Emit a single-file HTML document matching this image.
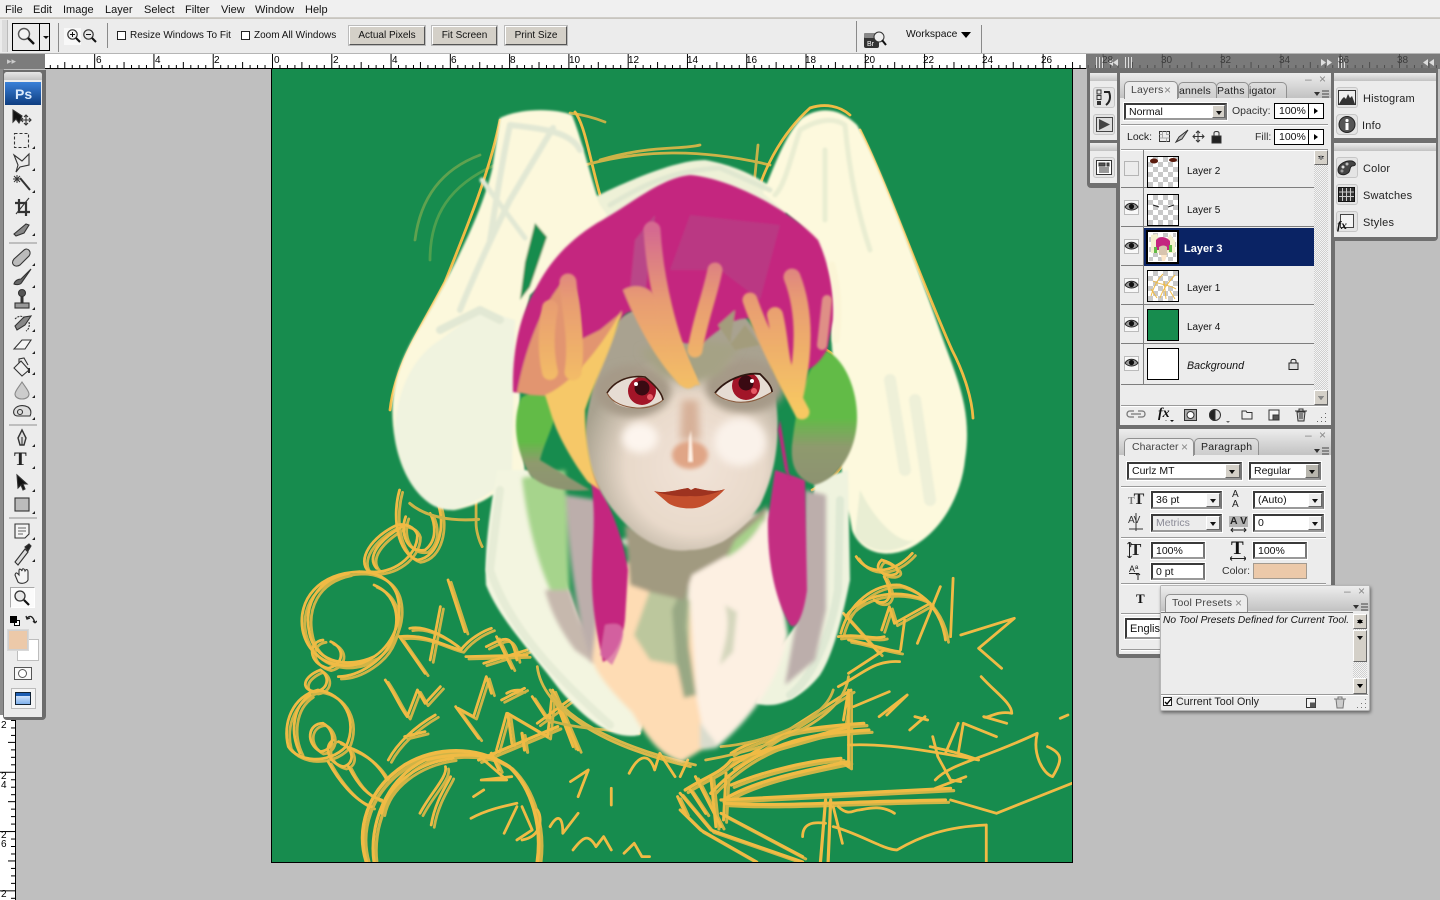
<!DOCTYPE html>
<html lang="en"><head><meta charset="utf-8"><title>Photoshop</title>
<style>
html,body{margin:0;padding:0;width:1440px;height:900px;overflow:hidden;background:#bfbfbf;font-family:"Liberation Sans",sans-serif;font-size:11px;color:#111}
div,span,svg{position:absolute;box-sizing:border-box}
.t{white-space:nowrap;line-height:13px}
.m{top:3px;font-size:11px;line-height:14px;color:#111;white-space:nowrap}
.btn{top:26px;height:19px;background:#d4d0c8;border:1px solid;border-color:#fff #555 #555 #fff;box-shadow:0 0 0 1px #bbb;text-align:center;font-size:10px;line-height:18px;white-space:nowrap}
.cb{width:9px;height:9px;background:#fff;border:1px solid #222;top:31px}
.vs{width:1px;background:#8a8a8a}
.lab{top:55px;font-size:10px;line-height:11px;color:#000}
.lab2{top:55px;font-size:10px;line-height:11px;color:#3c3c3c}
.p{background:#ececec}
.hd{background:linear-gradient(#ededed,#c2c2c2)}
.tab{background:linear-gradient(#dedede,#cdcdcd);border:1px solid #909090;border-bottom:0;border-radius:5px 5px 0 0;font-size:10.5px;line-height:17px;color:#222;letter-spacing:.15px;white-space:nowrap;overflow:hidden;text-align:left}
.tab.a{background:#ececec;color:#444}
.x{color:#888;font-size:12px;line-height:13px;white-space:nowrap}
.in{background:#fff;border:2px solid #3a3a3a;border-right-color:#777;border-bottom-color:#999;box-shadow:0 0 0 1px #fff;font-size:10.5px;line-height:13px;padding-left:3px;white-space:nowrap;overflow:hidden;color:#111}
.dd{background:#d4d0c8;border:1px solid;border-color:#fff #666 #666 #fff}
.dd:after{content:"";position:absolute;left:3px;top:5px;border:3px solid transparent;border-top:4px solid #111;border-bottom:0}
.hr{height:1px;background:#9a9a9a;box-shadow:0 1px 0 #fff}
.row{left:1121px;width:193px;height:38px;border-bottom:1px solid #7e7e7e}
.th{left:1147px;width:32px;height:32px;border:1px solid #000;background:repeating-conic-gradient(#c8c8c8 0 25%,#fff 0 50%) 0 0/10px 10px}
.ln{left:1187px;font-size:10px;line-height:13px;white-space:nowrap;color:#111}
.eb{left:1124px;width:15px;height:15px;background:#f8f8f8;border:1px solid #bbb}
.rb{left:1336px;width:22px;height:21px;background:#e4e4e4;border:1px solid #c6c6c6;border-radius:3px}
.rt{left:1363px;font-size:11px;color:#222;letter-spacing:.2px;white-space:nowrap;line-height:13px}
.s path,.s ellipse{vector-effect:non-scaling-stroke;fill:none;stroke:#f0bb45;stroke-width:2.8;stroke-linecap:round;stroke-linejoin:round}
.f path{vector-effect:non-scaling-stroke;fill:none;stroke-linecap:round;stroke-linejoin:round}
</style></head><body>

<!-- canvas area background -->
<div style="left:0;top:0;width:1440px;height:900px;background:#bfbfbf"></div>

<!-- artwork -->
<div style="left:271px;top:68px;width:802px;height:795px;border:1px solid #000;background:#178c4e"></div>
<svg style="left:272px;top:69px" width="800" height="793" viewBox="272 69 800 793">
<defs>
<filter id="b1" x="-20%" y="-20%" width="140%" height="140%"><feGaussianBlur stdDeviation="1"/></filter>
<filter id="b2" x="-20%" y="-20%" width="140%" height="140%"><feGaussianBlur stdDeviation="2"/></filter>
<filter id="b4" x="-30%" y="-30%" width="160%" height="160%"><feGaussianBlur stdDeviation="4"/></filter>
<filter id="b8" x="-40%" y="-40%" width="180%" height="180%"><feGaussianBlur stdDeviation="8"/></filter>
<linearGradient id="bang2" gradientUnits="userSpaceOnUse" x1="0" y1="230" x2="0" y2="410"><stop offset="0" stop-color="#d56a90"/><stop offset=".4" stop-color="#e89d72"/><stop offset="1" stop-color="#f7c862"/></linearGradient>
<linearGradient id="hp" x1="0" y1="0" x2="0" y2="1"><stop offset="0" stop-color="#62bb47"/><stop offset=".5" stop-color="#62bb47"/><stop offset=".72" stop-color="#8f9a6e"/><stop offset="1" stop-color="#8d9270"/></linearGradient>
<radialGradient id="skin" gradientUnits="userSpaceOnUse" cx="695" cy="465" r="115"><stop offset="0" stop-color="#f2e4d8"/><stop offset=".6" stop-color="#e8d9ca"/><stop offset="1" stop-color="#a9a290"/></radialGradient>
<clipPath id="el"><path d="M607 393C615 380 630 376 645 378C655 385 663 395 663 400C645 410 625 410 615 403Z"/></clipPath>
<clipPath id="er"><path d="M715 393C725 380 745 372 760 375C768 383 772 388 772 392C760 400 740 405 725 400Z"/></clipPath>
</defs>

<!-- upper sketch lines -->
<g class="s">
<path d="M575 112C585 125 590 160 600 195"/>
<path d="M570 113C585 115 595 118 605 122" opacity=".8"/>
<path d="M585 165C640 150 700 148 770 165" style="stroke:#cdb348"/>
<path d="M600 160C650 145 680 150 700 145" style="stroke:#cdb348"/>
<path d="M415 240C420 200 440 170 480 155" style="stroke:#5fa24f"/>
<path d="M430 260C430 215 450 185 495 165" style="stroke:#4ea04f"/>
<path d="M755 205C760 175 780 135 810 108C825 103 840 106 850 115"/>
<path d="M758 145L752 205" style="stroke:#c7b24a"/>
<path d="M500 120C490 170 470 220 445 282C420 330 395 365 390 410"/>
<path d="M860 130C885 180 925 290 952 350C965 375 972 400 973 418"/>
<path d="M800 345C830 340 855 370 857 410C858 450 840 478 812 490"/>
</g>
<g class="s" transform="translate(272 460) scale(.5102 .3333)">
<g id="sk">
<path d="M250 90C235 170 245 280 285 300C330 290 340 190 325 130"/>
<path d="M262 170C250 220 265 280 300 270C325 240 320 190 310 160"/>
<path d="M245 195C195 230 165 300 190 335C235 345 285 290 285 225C280 200 262 190 245 195"/>
<path d="M255 200C210 240 185 290 205 325"/>
<path d="M172 335C90 340 50 420 60 510C70 590 120 635 175 610C235 575 260 480 245 405C235 360 205 335 172 335"/>
<path d="M150 340C85 360 60 440 75 530C90 610 150 625 200 590"/>
<path d="M200 375C240 400 255 470 235 540C220 600 170 650 130 650"/>
<path d="M100 540C70 545 70 610 110 625C140 615 145 565 115 545"/>
<path d="M95 630C60 650 55 690 85 695C110 690 115 650 95 630"/>
<path d="M90 690C40 710 20 790 32 860C50 905 110 915 145 860C170 780 140 700 90 690"/>
<path d="M75 705C40 740 35 820 55 880"/>
<path d="M100 790C70 790 65 850 95 875C125 870 125 810 100 790"/>
<path d="M120 840C100 860 110 910 140 920C165 910 160 860 130 845"/>
<path d="M145 860C190 880 215 930 225 960"/>
<path d="M110 905C130 960 160 1020 195 1040"/>
<path d="M150 920C170 980 190 1010 215 1020"/>
<path d="M185 1206C165 1110 185 990 260 915C320 860 400 855 465 920C510 985 530 1100 520 1206" style="stroke-width:3.6"/>
<path d="M200 1206C190 1100 220 960 300 900C340 885 400 875 440 900" style="stroke-width:3.2"/>
<path d="M215 1060C225 980 280 910 355 895"/>
<path d="M290 1060C310 1000 345 950 340 920M312 1095C320 1020 345 970 350 950"/>
<path d="M250 530C300 520 340 560 370 570C390 530 420 510 430 505"/>
<path d="M270 505C300 495 340 530 365 560"/>
<path d="M345 360L378 515M330 440L310 600M250 530L300 640"/>
<path d="M222 660C240 700 250 740 265 770L285 690L300 730L330 680"/>
<path d="M228 900C245 850 280 800 320 765M260 830L300 815"/>
<path d="M380 590L500 585M415 610L500 570M420 560C460 530 470 520 480 600M440 530L470 625"/>
<path d="M360 740L405 835M365 745L395 770L420 650L430 700"/>
<path d="M450 720L495 685M460 700C470 690 480 690 490 690"/>
<path d="M440 870L460 760M470 850L462 760L540 830L550 690L600 870M550 700L590 860M510 710L540 780M520 790L600 700"/>
<path d="M405 900L560 800M430 880L445 930M490 820L495 870" style="stroke-width:3.2"/>
<path d="M810 990C850 950 880 940 900 900L1130 800" style="stroke-width:3.4"/>
<path d="M890 1015C950 960 1050 930 1130 905" style="stroke-width:3.4"/>
<path d="M900 975C970 930 1060 900 1115 895" style="stroke-width:3.2"/>
<path d="M880 1020C1000 1010 1150 1000 1330 985" style="stroke-width:3.2"/>
<path d="M890 1030C1000 1040 1120 1025 1320 1020" style="stroke-width:3.2"/>
<path d="M860 1000C950 850 1050 820 1170 810" style="stroke-width:3.2"/>
<path d="M900 880C960 820 1060 800 1160 790" style="stroke-width:3.2"/>
<path d="M900 920L1135 690M1130 690L1130 920L1115 905M1130 690L1120 780"/>
<path d="M830 950L880 1100M860 950L870 1100M890 940L885 1080M800 1000L860 1110L1040 1206M800 1050L840 1110L950 1206M880 1060L1040 1190M820 990L850 1060M795 1010L810 1060" style="stroke-width:3"/>
<path d="M1115 520C1130 430 1180 370 1230 375C1290 400 1315 480 1320 540M1125 470C1150 410 1220 380 1280 420"/>
<path d="M1290 430L1220 490L1210 440L1195 510M1130 540C1170 550 1200 570 1230 575M1110 530C1150 520 1180 540 1200 530M1120 460L1190 580"/>
<path d="M1195 300C1220 310 1240 340 1215 345C1190 345 1180 320 1195 300M1145 290C1170 350 1220 340 1255 280M1180 420C1200 440 1225 420 1200 350"/>
</g>
<use href="#sk" transform="translate(6 7)" opacity=".85"/>
<path d="M270 130C300 170 350 185 405 178" style="stroke:#cdb348;stroke-width:3"/>
<path d="M400 120V190C400 210 405 240 412 260" style="stroke:#cdb348"/>
<path d="M520 620C530 750 650 860 820 920" style="stroke:#d8b84a"/>
<path d="M545 690C580 790 700 870 830 915" style="stroke:#d8b84a"/>
<path d="M540 780C600 810 680 810 720 820" style="stroke:#cdb348"/>
<path d="M1130 650C1120 770 1000 860 850 900" style="stroke:#d8b84a"/>
<path d="M1100 690C1080 790 960 850 880 860" style="stroke:#cdb348"/>
<path d="M1140 740L1210 695"/>
<path d="M1130 855C1200 850 1280 870 1385 900C1350 880 1320 870 1290 860"/>
<path d="M1085 1020L1075 1206M1095 1020L1090 1206" style="stroke-width:3.2"/>
<path d="M1100 1040L1118 1150"/>
<path d="M1100 1100C1150 1120 1200 1170 1225 1170C1270 1130 1320 1100 1400 1095L1400 1206"/>
<path d="M1040 1130C1040 1090 1060 1085 1085 1090M1110 1040C1130 1070 1140 1050 1150 1050C1160 1050 1190 1030 1220 1060"/>
<path d="M1330 1020L1420 1060L1568 970"/>
<path d="M1300 960C1330 910 1390 900 1500 820C1490 880 1510 940 1530 950C1550 900 1550 880 1520 860"/>
<path d="M1295 830L1305 890L1330 960L1350 965M1345 880L1355 790L1420 830M1345 790L1320 880M1300 985L1360 950"/>
<path d="M1350 525L1455 475L1385 565L1430 625"/>
<path d="M1390 650C1420 700 1450 730 1450 760C1420 750 1400 780 1395 770L1440 790"/>
<path d="M1190 770L1245 705L1205 765M1250 810L1280 770M1260 770L1285 780M1545 775L1560 765"/>
<path d="M1335 355L1330 530M1310 380L1265 550M1240 480L1232 570"/>
<path d="M1110 680C1160 640 1180 600 1230 605M1130 640L1200 570"/>
<path d="M700 940C720 880 740 880 750 930L760 880L790 950M815 900L800 950"/>
<path d="M585 965L620 930L600 1010M665 985V1035"/>
<path d="M590 1170C610 1130 620 1120 635 1160L650 1130L665 1170M690 1180L710 1150L725 1190L740 1190"/>
<path d="M545 1100C560 1060 570 1070 570 1120L600 1060"/>
<path d="M415 990L395 1010M390 1075C420 1050 450 1040 480 1030M480 1040L455 1120M490 1040L510 1110L480 1140"/>
<path d="M520 1050C530 1070 530 1130 490 1140"/>
<path d="M415 900L460 960L410 960L470 950"/>
</g>

<!-- hood and ears -->
<g filter="url(#b1)">
<path d="M597 196C640 175 680 160 705 160C735 165 770 180 790 205L770 240L610 240Z" fill="#eef1d7"/>
<!-- left ear -->
<path d="M500 118C520 108 555 108 572 115C582 140 590 175 600 205L607 215L597 240L560 270L530 295L518 350L520 400L525 475L505 480C498 495 480 505 455 510C425 512 402 480 395 440C388 400 395 370 415 335C445 285 480 220 492 170Z" fill="#fcf8dc"/>
<path d="M535 223L547 237L530 287L520 300L525 262Z" fill="#178c4e"/>
<path d="M480 310L515 320L512 470C495 495 470 505 450 510C425 510 402 480 395 435C395 390 415 355 440 340Z" fill="#f0f3df"/>
<!-- right ear -->
<path d="M763 193C775 165 785 135 802 118C820 106 840 108 857 125C880 165 915 260 945 345C960 385 972 415 965 460C962 490 945 530 910 548C885 560 860 552 852 530L840 460L830 320L820 250L800 225Z" fill="#fdf9dd"/>
<path d="M860 490C880 530 905 545 915 540C895 555 870 555 855 535Z" fill="#e9eed3"/>
<!-- long side flaps -->
<path d="M497 470C490 510 484 550 486 585C500 620 530 650 560 690C590 725 615 740 640 735L650 705C610 680 590 650 572 600L545 530L530 470Z" fill="#f3f5e0"/>
<path d="M815 480L848 470L850 580C840 630 830 660 820 675C800 700 775 710 755 703L770 660L800 620Z" fill="#eff3de"/>
</g>
<g class="f" filter="url(#b1)" fill="none" stroke-linecap="round" stroke-linejoin="round">
<path d="M510 125C500 170 495 210 490 240M510 125C535 128 570 130 580 150M553 128L510 200C490 240 470 285 460 310" stroke="#e2e8d4" stroke-width="6"/>
<path d="M482 180L525 238" stroke="#e2e8d4" stroke-width="5"/>
<path d="M440 330L480 310L500 320" stroke="#e2e8d4" stroke-width="8"/>
<path d="M800 130C790 160 785 185 775 195M800 130C820 118 835 118 845 125M845 125C850 180 860 220 870 250M825 150L825 220" stroke="#e9edd2" stroke-width="5"/>
<path d="M610 205C650 180 680 170 720 168L770 190" stroke="#e0e7d0" stroke-width="5"/>
<path d="M890 380L905 470M915 400L930 500" stroke="#eef0d8" stroke-width="12"/>
<path d="M500 490L490 570C510 630 560 680 610 725" stroke="#e6ecd6" stroke-width="8"/>
<path d="M840 500L838 590C830 640 810 680 790 695" stroke="#dfe9d4" stroke-width="8"/>
</g>

<!-- behind-face strands -->
<g filter="url(#b2)">
<path d="M522 478L565 470L570 600L555 600C540 570 528 530 522 478Z" fill="#a6d48c"/>
<path d="M566 495L598 500L610 662L590 662C578 620 568 560 566 495Z" fill="#bcaeab"/>
<path d="M805 490L826 495L826 610L815 660L785 685L800 600Z" fill="#bcaeab"/>
<path d="M545 590L570 590L592 662L575 650C560 630 550 610 545 590Z" fill="#c6b8ad"/>
</g>

<!-- neck -->
<g filter="url(#b2)">
<path d="M620 540L770 510L788 635C780 680 750 720 716 748L700 750L680 600Z" fill="#fdf0e2"/>
<path d="M600 590L629 560L690 600L697 700L706 747L682 762C662 757 648 740 632 712C610 690 598 675 592 660Z" fill="#fedcb4"/>
<path d="M650 590L690 600L688 690L676 665L650 660L634 635Z" fill="#bcc79d"/>
<path d="M690 570L686 627L696 695L684 698L676 660L672 610Z" fill="#98a884"/>
<path d="M625 525L680 545L721 540L768 505L765 520L726 556L692 575L684 600L650 592L630 585Z" fill="#a19a80"/>
<path d="M767 512C760 530 745 548 726 558L735 540Z" fill="#a7d18b"/>
<path d="M725 605C732 630 722 650 720 665L733 652L737 612Z" fill="#cbd1b4" opacity=".8"/>
<path d="M700 722C710 737 720 745 716 748L700 748Z" fill="#d9dccd"/>
</g>
<!-- long magenta strands -->
<g filter="url(#b1)">
<path d="M588 465C605 495 622 530 628 570L625 620C622 645 612 658 603 662C598 640 592 610 592 580C592 540 598 510 588 465Z" fill="#c4257f"/>
<path d="M775 470L805 480L807 590C803 620 795 630 790 625C775 600 767 560 768 520Z" fill="#c42e82"/>
<path d="M605 625C625 620 630 630 612 665L600 655Z" fill="#d770a8" opacity=".8"/>
</g>

<!-- headphones -->
<g filter="url(#b1)">
<path d="M521 398C535 388 550 392 557 405C555 425 545 440 540 460L590 490C570 492 545 490 530 475C515 450 512 420 521 398Z" fill="url(#hp)"/>
<path d="M822 350C840 352 858 385 857 420C856 450 840 478 815 485C800 480 790 470 792 445C795 420 800 380 822 350Z" fill="url(#hp)"/>
</g>

<!-- face -->
<g filter="url(#b1)">
<path d="M620 318C600 360 586 400 585 440C588 480 610 510 632 530C650 545 670 553 690 550C715 550 740 535 760 505C772 480 780 450 777 410L770 350L740 310L710 300L650 300Z" fill="url(#skin)"/>
</g>
<ellipse cx="633" cy="391" rx="38" ry="26" fill="#a69a88" filter="url(#b4)"/>
<ellipse cx="745" cy="386" rx="40" ry="27" fill="#a69a88" filter="url(#b4)"/>
<path d="M640 350L700 340L740 345L720 375L690 385L660 375Z" fill="#a5a285" filter="url(#b4)"/>
<ellipse cx="640" cy="438" rx="18" ry="15" fill="#fdf5ee" filter="url(#b4)"/>
<ellipse cx="740" cy="442" rx="26" ry="24" fill="#faf2ea" filter="url(#b4)"/>
<path d="M682 400L698 400L700 440L680 440Z" fill="#d7b199" filter="url(#b4)"/>
<ellipse cx="690" cy="455" rx="18" ry="14" fill="#e0a586" filter="url(#b2)"/>
<path d="M689 438L691 430L692 445L693 462L688 462Z" fill="#fff3e8" filter="url(#b1)"/>

<!-- eyes -->
<path d="M607 393C615 380 630 376 645 378C655 385 663 395 663 400C645 410 625 410 615 403Z" fill="#e6dcd3"/>
<path d="M715 393C725 380 745 372 760 375C768 383 772 388 772 392C760 400 740 405 725 400Z" fill="#e6dcd3"/>
<g clip-path="url(#el)"><circle cx="642" cy="391" r="14" fill="#a21528"/><circle cx="642" cy="388" r="7.5" fill="#3a0a12"/><circle cx="650" cy="397" r="3" fill="#e75a66"/><circle cx="636" cy="384" r="2" fill="#fff"/></g>
<g clip-path="url(#er)"><circle cx="746" cy="386" r="14" fill="#a21528"/><circle cx="746" cy="383" r="7.5" fill="#3a0a12"/><circle cx="754" cy="391" r="3" fill="#e75a66"/><circle cx="752" cy="381" r="2" fill="#fff"/></g>
<path d="M607 393C615 380 630 375 645 377C655 385 662 393 663 400" fill="none" stroke="#3a1d12" stroke-width="1.6"/>
<path d="M607 393C612 403 625 408 640 408C650 408 658 404 663 400" fill="none" stroke="#8a5a3c" stroke-width="1"/>
<path d="M715 393C725 380 745 372 760 374C766 380 772 386 772 392" fill="none" stroke="#2f1710" stroke-width="1.8"/>
<path d="M715 393C722 400 735 403 745 402C755 402 765 396 772 392" fill="none" stroke="#8a5a3c" stroke-width="1"/>

<!-- lips -->
<path d="M654 491C665 494 675 490 688 488L691 490L695 488C705 490 715 493 725 489C718 497 708 504 700 507C690 510 675 508 668 503Z" fill="#c44f2d"/>
<path d="M654 491C665 494 675 490 688 488L691 490L695 488C705 490 715 493 725 489C712 495 700 497 690 496C678 497 665 495 654 491Z" fill="#9e3320"/>

<!-- hair -->
<g filter="url(#b1)">
<path d="M690 175C660 178 630 205 597 223C570 240 550 260 535 290C520 315 512 350 513 392C525 395 540 390 550 385C570 370 590 350 620 320C635 300 640 320 660 340L700 345C730 320 740 315 760 320L780 360C800 380 815 370 827 350L833 320C835 285 825 255 818 240C790 210 730 178 690 175Z" fill="#c4257f"/>
<path d="M690 215L780 225L760 300L720 270L670 270Z" fill="#b83c84" opacity=".8"/>
<path d="M635 240L655 215L645 295L630 290Z" fill="#b5558b" opacity=".7"/>
<path d="M718 325L735 310L730 345L745 325L760 345L735 350Z" fill="#a39c7c"/>
<path d="M517 392C525 350 540 310 560 285C575 275 582 300 580 340L600 330L622 312C610 350 590 380 565 397L530 395Z" fill="#e2956f"/>
<path d="M622 310C612 350 595 380 585 410C585 440 590 470 600 490L588 482C575 465 560 440 553 420L545 395C570 385 600 350 622 310Z" fill="#f6c868"/>
<path d="M623 290C640 280 655 290 665 310L700 385L680 385C655 360 635 320 623 290Z" fill="url(#bang2)"/>
</g>
<g class="f" fill="none" filter="url(#b1)" stroke-linecap="round" stroke-linejoin="round">
<path d="M568 282C570 310 578 340 573 372" stroke="url(#bang2)" stroke-width="17"/>
<path d="M550 308C546 330 545 350 550 372" stroke="url(#bang2)" stroke-width="16"/>
<path d="M652 230C655 280 668 335 688 380" stroke="url(#bang2)" stroke-width="17"/>
<path d="M715 270C710 295 700 320 695 350" stroke="url(#bang2)" stroke-width="15"/>
<path d="M750 300C760 330 785 380 802 412" stroke="url(#bang2)" stroke-width="15"/>
<path d="M792 277C805 310 805 350 795 395" stroke="url(#bang2)" stroke-width="17"/>
<path d="M775 315C780 335 780 355 785 372" stroke="url(#bang2)" stroke-width="16"/>
<path d="M827 300L822 345" stroke="#df8f86" stroke-width="10"/>
<path d="M832 265C838 290 840 310 836 340" stroke="#fbf5d6" stroke-width="7"/>
</g>
<path d="M780 420L790 480L785 470L778 430Z" fill="#c4257f" filter="url(#b1)"/>
</svg>

<!-- menu bar -->
<div style="left:0;top:0;width:1440px;height:18px;background:#f0f0f0;border-bottom:1px solid #cfcdc8"></div>
<span class="m" style="left:5px">File</span><span class="m" style="left:33px">Edit</span><span class="m" style="left:63px">Image</span><span class="m" style="left:105px">Layer</span><span class="m" style="left:144px">Select</span><span class="m" style="left:185px">Filter</span><span class="m" style="left:221px">View</span><span class="m" style="left:255px">Window</span><span class="m" style="left:305px">Help</span>

<!-- options bar -->
<div style="left:0;top:18px;width:1440px;height:36px;background:#ececec;border-top:1px solid #c8c5bf;border-bottom:1px solid #b5b5b5"></div>
<div style="left:2px;top:20px;width:6px;height:32px;background:#dcdcdc;border-right:1px solid #bbb"></div>
<div style="left:12px;top:23px;width:38px;height:28px;border:1px solid #000;background:#ececec"></div>
<div style="left:39px;top:23px;width:1px;height:28px;background:#000"></div>
<div style="left:43px;top:36px;border:3px solid transparent;border-top:3px solid #111;border-bottom:0"></div>
<svg style="left:16px;top:26px" width="20" height="20"><circle cx="8" cy="8" r="5.5" fill="#f4f4f4" stroke="#555" stroke-width="1.4"/><path d="M12 12L18 18" stroke="#111" stroke-width="2.4"/></svg>
<div class="vs" style="left:58px;top:23px;height:29px"></div>
<div style="left:64px;top:28px;width:17px;height:17px;background:#f8f8f8"></div>
<svg style="left:66px;top:28px" width="16" height="16"><circle cx="6.5" cy="6.5" r="4.7" fill="#f4f4f4" stroke="#333" stroke-width="1.2"/><path d="M4 6.5H9M6.5 4V9" stroke="#111"/><path d="M10 10L14 14" stroke="#111" stroke-width="2"/></svg>
<svg style="left:82px;top:28px" width="16" height="16"><circle cx="6.5" cy="6.5" r="4.7" fill="#e8e8e8" stroke="#333" stroke-width="1.2"/><path d="M4 6.5H9" stroke="#111"/><path d="M10 10L14 14" stroke="#111" stroke-width="2"/></svg>
<div class="vs" style="left:107px;top:23px;height:25px"></div>
<div class="cb" style="left:117px"></div><span class="t" style="left:130px;top:29px;font-size:10px">Resize Windows To Fit</span>
<div class="cb" style="left:241px"></div><span class="t" style="left:254px;top:29px;font-size:10px">Zoom All Windows</span>
<div class="btn" style="left:349px;width:76px">Actual Pixels</div>
<div class="btn" style="left:432px;width:65px">Fit Screen</div>
<div class="btn" style="left:505px;width:62px">Print Size</div>
<div class="vs" style="left:856px;top:21px;height:31px"></div>
<svg style="left:863px;top:30px" width="26" height="24"><rect x="1" y="3" width="15" height="15" rx="2" fill="#333"/><rect x="1" y="3" width="15" height="5" rx="1" fill="#888"/><circle cx="16" cy="7" r="5" fill="#eee" stroke="#333"/><path d="M19 10L23 15" stroke="#111" stroke-width="2"/><text x="4" y="16" font-size="7" fill="#fff" font-family="Liberation Sans">Br</text></svg>
<span class="t" style="left:906px;top:28px;font-size:10.3px">Workspace</span>
<div style="left:961px;top:32px;border:5px solid transparent;border-top:6px solid #000;border-bottom:0"></div>
<div class="vs" style="left:981px;top:25px;height:28px"></div>

<!-- rulers -->
<svg style="left:0;top:54px" width="1090" height="15">
<defs><pattern id="rt" patternUnits="userSpaceOnUse" x="272" y="0" width="59.28" height="15"><path d="M.5 0V14M30.1 8V14M7.9 11V14M15.3 11V14M22.7 11V14M37.5 11V14M44.9 11V14M52.3 11V14" stroke="#000" fill="none" shape-rendering="crispEdges"/></pattern></defs>
<rect width="1090" height="14" fill="#fff"/><rect width="1090" height="14" fill="url(#rt)"/><rect y="14" width="1090" height="1" fill="#000"/>
</svg>
<span class="lab" style="left:96px">6</span><span class="lab" style="left:155px">4</span><span class="lab" style="left:214px">2</span><span class="lab" style="left:274px">0</span><span class="lab" style="left:333px">2</span><span class="lab" style="left:392px">4</span><span class="lab" style="left:451px">6</span><span class="lab" style="left:510px">8</span><span class="lab" style="left:569px">10</span><span class="lab" style="left:628px">12</span><span class="lab" style="left:687px">14</span><span class="lab" style="left:746px">16</span><span class="lab" style="left:805px">18</span><span class="lab" style="left:864px">20</span><span class="lab" style="left:923px">22</span><span class="lab" style="left:982px">24</span><span class="lab" style="left:1041px">26</span>
<div style="left:0;top:54px;width:45px;height:15px;background:#7c7c7c"></div>
<span class="t" style="left:7px;top:55px;color:#ccc;font-size:9px">▸▸</span>

<!-- vertical ruler -->
<div style="left:0;top:69px;width:4px;height:650px;background:#8b8b8b"></div>
<svg style="left:0;top:715px" width="16" height="185">
<defs><pattern id="rv" patternUnits="userSpaceOnUse" x="0" y="-2.5" width="15" height="59.28"><path d="M0 .5H15M8 30.1H15M11 7.9H15M11 15.3H15M11 22.7H15M11 37.5H15M11 44.9H15M11 52.3H15" stroke="#000" fill="none" shape-rendering="crispEdges"/></pattern></defs>
<rect width="15" height="185" fill="#fff"/><rect width="15" height="185" fill="url(#rv)"/><rect x="15" width="1" height="185" fill="#000"/>
</svg>
<span class="lab" style="left:1px;top:720px">2</span>
<span class="lab" style="left:1px;top:771px">2</span><span class="lab" style="left:1px;top:780px">4</span>
<span class="lab" style="left:1px;top:830px">2</span><span class="lab" style="left:1px;top:839px">6</span>
<span class="lab" style="left:1px;top:889px">2</span>

<!-- toolbox -->
<div style="left:3px;top:70px;width:43px;height:650px;background:#6c6c6c;border-radius:0 0 4px 4px"></div>
<div class="p" style="left:4px;top:72px;width:38px;height:645px;border-radius:3px 3px 0 0"></div>
<div style="left:4px;top:72px;width:38px;height:8px;background:linear-gradient(#e6e6e6,#c4c4c4);border-radius:3px 3px 0 0"></div>
<div style="left:5px;top:82px;width:36px;height:23px;background:linear-gradient(#3a80d8,#0e3d80)"></div>
<span class="t" style="left:15px;top:86px;color:#dbeafc;font-size:14px;line-height:16px;font-weight:bold">Ps</span>
<svg style="left:0;top:100px" width="46" height="620" viewBox="0 100 46 620">
<g fill="none" stroke="#333" stroke-width="1.1">
<path d="M13 110V122L16 119L19 123L20 121L22 116Z" fill="#111"/><path d="M26 115V125M21 120H31M24 117L26 115L28 117M24 123L26 125L28 123M23 118L21 120L23 122M29 118L31 120L29 122"/>
<rect x="14.5" y="133.5" width="14" height="14" stroke-dasharray="3 2"/>
<path d="M14 155L22 161L29 154V165L20 167L16 172L18 165Z"/>
<path d="M20 178L30 190" stroke-width="2"/><path d="M17 175V183M13 179H21M14 176L20 182M20 176L14 182" stroke-width="1"/>
<path d="M19 199V212H30M15 203H26V216" stroke-width="2.2"/><path d="M16 214L29 198"/>
<path d="M14 234L26 224L29 225L24 233L16 236Z" fill="#888"/>
<path d="M14 259L24 250C28 247 32 252 29 256L20 265C15 268 10 264 14 259Z" fill="#bbb"/>
<path d="M14 284C15 280 19 279 21 279L31 269L22 282C21 285 16 285 14 284Z" fill="#666"/>
<path d="M22 293V303" stroke-width="3"/><circle cx="22" cy="293" r="3.5" fill="#555"/><rect x="15" y="303" width="14" height="5" fill="#999"/>
<path d="M15 326L24 317L31 316L25 325L17 330Z" fill="#888"/><path d="M15 319C19 315 23 316 24 318M29 322C30 327 28 330 26 331" stroke-dasharray="2 1"/>
<path d="M14 349L22 340H31L25 349Z" fill="#f6f6f6"/>
<path d="M14 368L21 361L29 370L22 376Z" fill="#eee"/><path d="M19 363V359L24 358L28 365"/><path d="M29 368V373" stroke="#333" stroke-width="2"/>
<path d="M22 382C18 388 15 391 15 394C15 397 18 399 22 399C26 399 29 397 29 394C29 391 26 388 22 382Z" fill="#ccc" stroke="#888"/>
<path d="M14 410C16 406 22 404 28 407C32 410 31 414 30 416H18C14 416 13 413 14 410Z" fill="#ddd"/><circle cx="20" cy="412" r="2.5"/>
<path d="M22 430L26 438L24 445H20L18 438Z" fill="#ddd" stroke-width="1.4"/><path d="M22 437V445"/>
<path d="M17 475L18 488L21 485L23 490L25 489L23 484L27 484Z" fill="#111"/>
<rect x="15" y="498" width="14" height="13" fill="#bbb" stroke="#333"/>
<path d="M15 524H29V534L25 538H15Z" fill="#f4f4f4"/><path d="M18 528H26M18 531H26M18 534H23" stroke-width=".8"/>
<path d="M15 562L25 549L28 552L18 565Z" fill="#ddd"/><path d="M25 547L29 544L31 546L28 551Z" fill="#222"/>
<path d="M15 575C16 571 18 574 19 575V571C19 568 21 569 22 571C22 568 24 568 25 571C26 569 28 569 28 572V580C26 584 20 584 18 582Z" fill="#f4f4f4"/>
</g>
<g fill="#222"><path d="M35 146v3h-3zM35 168v3h-3zM35 190v3h-3zM35 233v3h-3zM35 263v3h-3zM35 285v3h-3zM35 307v3h-3zM35 329v3h-3zM35 351v3h-3zM35 372v3h-3zM35 395v3h-3zM35 417v3h-3zM35 444v3h-3zM35 466v3h-3zM35 489v3h-3zM35 511v3h-3zM35 537v3h-3zM35 559v3h-3z"/></g>
<path d="M9 243H37M9 425H37M9 518H37" stroke="#8f8f8f" fill="none"/>
</svg>
<span class="t" style="left:14px;top:450px;font-family:'Liberation Serif',serif;font-weight:bold;font-size:19px;line-height:20px;color:#222">T</span>
<div style="left:10px;top:587px;width:25px;height:21px;background:#fbfbfb;border:1px solid #aaa;border-right-color:#fff;border-bottom-color:#fff"></div>
<svg style="left:13px;top:589px" width="18" height="18"><circle cx="7" cy="7" r="5" fill="#e8e8e8" stroke="#333" stroke-width="1.3"/><path d="M11 11L16 16" stroke="#111" stroke-width="2.2"/></svg>
<div style="left:13px;top:619px;width:6px;height:6px;background:#fff;border:1px solid #000;margin:1px 0 0 1px"></div>
<div style="left:10px;top:616px;width:7px;height:7px;background:#000"></div>
<svg style="left:25px;top:614px" width="12" height="12"><path d="M2 4C5 1 8 2 10 9M1 2L2 5L5 4M10 9L8 7M10 9L12 7" fill="none" stroke="#222" stroke-width="1.3"/></svg>
<div style="left:17px;top:639px;width:22px;height:22px;background:#fff;border:1px solid #bdbdbd"></div>
<div style="left:7px;top:629px;width:22px;height:22px;background:#ecc9a9;border:1px solid #d8d8d8;box-shadow:0 0 0 1px #cfcfcf inset"></div>
<div style="left:14px;top:667px;width:18px;height:13px;background:#f8f8f8;border:1px solid #555"></div>
<div style="left:18px;top:669px;width:9px;height:9px;background:#fff;border:1px solid #555;border-radius:50%"></div>
<div style="left:11px;top:688px;width:25px;height:21px;background:#f4f4f4;border:1px solid #bbb"></div>
<div style="left:15px;top:692px;width:16px;height:13px;border:1px solid #123;background:linear-gradient(#1c5db3 0 3px,#cfe2fb 3px,#7fb0ec)"></div>

<!-- right docks: dark frames -->
<div style="left:1086px;top:54px;width:354px;height:15px;background:#7a7a7a"></div>
<div style="left:1087px;top:68px;width:34px;height:120px;background:#6f6f6f;border-radius:0 0 4px 4px"></div>
<div style="left:1116px;top:68px;width:219px;height:590px;background:#6f6f6f;border-radius:0 0 4px 4px"></div>
<div style="left:1331px;top:68px;width:107px;height:173px;background:#6f6f6f;border-radius:0 0 4px 4px"></div>
<svg style="left:1086px;top:54px" width="354" height="15">
<defs><pattern id="rd" patternUnits="userSpaceOnUse" x="16.6" y="0" width="59.28" height="15"><path d="M.5 0V14M30.1 8V14M7.9 11V14M15.3 11V14M22.7 11V14M37.5 11V14M44.9 11V14M52.3 11V14" stroke="#4d4d4d" fill="none" shape-rendering="crispEdges"/></pattern></defs>
<rect width="354" height="14" fill="url(#rd)"/>
<path d="M10.5 3V14M13.5 3V14M16.5 3V14M39.5 3V14M42.5 3V14M45.5 3V14M252.5 3V14M255.5 3V14M258.5 3V14" stroke="#ddd" fill="none"/>
<path d="M27 8L22 11.5L27 15ZM32 8L27 11.5L32 15ZM235 8L240 11.5L235 15ZM241 8L246 11.5L241 15ZM348 8L343 11.5L348 15ZM342 8L337 11.5L342 15Z" transform="translate(0 -3)" fill="#ddd"/>
</svg>
<span class="lab2" style="left:1102px">28</span><span class="lab2" style="left:1161px">30</span><span class="lab2" style="left:1220px">32</span><span class="lab2" style="left:1279px">34</span><span class="lab2" style="left:1338px">36</span><span class="lab2" style="left:1397px">38</span>

<!-- small icon dock -->
<div class="p" style="left:1090px;top:73px;width:27px;height:67px"></div>
<div class="hd" style="left:1090px;top:73px;width:27px;height:8px"></div>
<div class="p" style="left:1090px;top:143px;width:27px;height:40px"></div>
<div class="hd" style="left:1090px;top:143px;width:27px;height:8px"></div>
<div class="rb" style="left:1093px;top:87px;width:22px;height:21px"></div>
<svg style="left:1096px;top:89px" width="17" height="17"><rect x="1" y="1" width="4" height="4" fill="none" stroke="#333"/><rect x="1" y="6.5" width="4" height="4" fill="none" stroke="#333"/><rect x="1" y="12" width="4" height="4" fill="#333"/><path d="M8 3H13C15 8 14 13 10 16" fill="none" stroke="#222" stroke-width="2"/></svg>
<div class="rb" style="left:1093px;top:114px;width:22px;height:21px"></div>
<svg style="left:1096px;top:117px" width="17" height="15"><rect x=".5" y=".5" width="16" height="14" fill="#ddd" stroke="#444"/><path d="M3 2L14 7.5L3 13Z" fill="#444"/></svg>
<div class="rb" style="left:1093px;top:157px;width:22px;height:21px"></div>
<svg style="left:1096px;top:160px" width="16" height="15"><rect x=".5" y=".5" width="15" height="14" fill="#fff" stroke="#333"/><path d="M3 3H9V6H3ZM11 3H13V6H11ZM3 8H13M3 10H13M3 12H13" stroke="#333" fill="#555"/></svg>

<!-- Layers panel -->
<div class="p" style="left:1120px;top:73px;width:211px;height:352px"></div>
<div class="hd" style="left:1120px;top:73px;width:211px;height:25px"></div>
<div class="tab" style="left:1178px;top:82px;width:39px;height:16px;line-height:16px">annels</div>
<div class="tab" style="left:1216px;top:82px;width:33px;height:16px;line-height:16px">Paths</div>
<div class="tab" style="left:1248px;top:82px;width:39px;height:16px;line-height:16px">igator</div>
<div class="tab a" style="left:1124px;top:81px;width:54px;height:18px;padding-left:6px">Layers</div>
<span class="x" style="left:1164px;top:84px">×</span>
<span class="x" style="left:1305px;top:73px">–</span><span class="x" style="left:1319px;top:73px">×</span>
<svg style="left:1313px;top:90px" width="17" height="9"><path d="M1 2H7L4 6Z" fill="#333"/><path d="M9 1H16M9 4H16M9 7H16" stroke="#444"/></svg>
<div class="in" style="left:1124px;top:103px;width:103px;height:17px;line-height:14px">Normal</div>
<div class="dd" style="left:1212px;top:105px;width:13px;height:13px"></div>
<span class="t" style="left:1232px;top:105px;color:#333;font-size:10.5px">Opacity:</span>
<div style="left:1274px;top:103px;width:50px;height:16px;background:#fff;border:1px solid #000;font-size:10.5px;line-height:15px;padding-left:4px">100%<div style="right:0;top:0;width:15px;height:14px;background:#fff;border-left:1px solid #000"></div><div style="right:5px;top:4px;border:3px solid transparent;border-left:4px solid #000;border-right:0"></div></div>
<div class="hr" style="left:1121px;top:124px;width:207px"></div>
<span class="t" style="left:1127px;top:131px;color:#222;font-size:10.5px">Lock:</span>
<svg style="left:1158px;top:129px" width="68" height="15"><g stroke="#333" fill="none"><rect x="1.5" y="2.5" width="10" height="10" fill="#eee"/><path d="M1.5 5.5H4.5V2.5M8.5 2.5V5.5H11.5M4.5 5.5V9H8.5V12.5M1.5 9H4.5M8.5 9H11.5" stroke="#aaa"/><path d="M18 13L21 8L30 1L24 10Z" fill="#bbb"/><path d="M40 2V13M35 7.5H46M38 4L40 2L42 4M38 11L40 13L42 11M37 5.5L35 7.5L37 9.5M44 5.5L46 7.5L44 9.5"/><rect x="54" y="7" width="9" height="7" fill="#222"/><path d="M56 7V4C56 2 61 2 61 4V7"/></g></svg>
<span class="t" style="left:1255px;top:131px;color:#333;font-size:10.5px">Fill:</span>
<div style="left:1274px;top:129px;width:50px;height:16px;background:#fff;border:1px solid #000;font-size:10.5px;line-height:15px;padding-left:4px">100%<div style="right:0;top:0;width:15px;height:14px;background:#fff;border-left:1px solid #000"></div><div style="right:5px;top:4px;border:3px solid transparent;border-left:4px solid #000;border-right:0"></div></div>
<div class="hr" style="left:1121px;top:149px;width:207px"></div>

<!-- layer rows -->
<div class="row" style="top:150px"></div><div class="row" style="top:189px"></div>
<div class="row" style="top:228px"></div>
<div style="left:1144px;top:228px;width:170px;height:38px;background:#0a2364"></div>
<div class="row" style="top:267px"></div><div class="row" style="top:306px"></div><div class="row" style="top:345px;height:40px"></div>
<div style="left:1143px;top:150px;width:1px;height:234px;background:#7e7e7e"></div>
<div class="eb" style="top:161px;background:#ececec;border-color:#b5b5b5"></div>
<svg width="0" height="0"><defs><g id="eye"><path d="M1 7C4 2 11 2 14 7C11 11 4 11 1 7Z" fill="#999" stroke="#222"/><circle cx="7.5" cy="6.5" r="2.6" fill="#111"/></g></defs></svg>
<div class="eb" style="top:200px"></div><svg style="left:1124px;top:200px" width="15" height="15"><use href="#eye"/></svg>
<div class="eb" style="top:239px"></div><svg style="left:1124px;top:239px" width="15" height="15"><use href="#eye"/></svg>
<div class="eb" style="top:278px"></div><svg style="left:1124px;top:278px" width="15" height="15"><use href="#eye"/></svg>
<div class="eb" style="top:317px"></div><svg style="left:1124px;top:317px" width="15" height="15"><use href="#eye"/></svg>
<div class="eb" style="top:356px"></div><svg style="left:1124px;top:356px" width="15" height="15"><use href="#eye"/></svg>

<div class="th" style="top:156px"><svg style="left:0;top:0" width="30" height="30"><ellipse cx="6" cy="4" rx="4" ry="2.5" fill="#5a1a0c"/><ellipse cx="25" cy="3" rx="4" ry="2" fill="#5a1a0c"/></svg></div>
<div class="th" style="top:194px"><svg style="left:0;top:0" width="30" height="30"><path d="M5 10L11 12M26 10L20 12" stroke="#222" fill="none"/></svg></div>
<div class="th" style="top:230px;left:1146px;width:33px;height:34px;border:2px solid #000;outline:1px solid #fff;outline-offset:-3px"><svg style="left:1px;top:1px" width="27" height="28" viewBox="0 0 27 28"><path d="M2 2L8 1L10 6H18L21 1L26 8V20H2Z" fill="#f6f2d0"/><path d="M7 7C10 3 17 3 21 8V17H7Z" fill="#c4257f"/><path d="M10 14C13 12 16 12 18 14V22H10Z" fill="#d8c4ae"/><path d="M5 14H8V20H5ZM20 12H23V19H20Z" fill="#62bb47"/><path d="M12 22H18L16 28H13Z" fill="#fde6c8"/></svg></div>
<div class="th" style="top:270px"><svg style="left:0;top:0" width="30" height="30"><path d="M3 25C6 15 10 8 15 3M12 27C15 18 20 12 27 4M5 10C12 14 20 13 28 18M16 10L18 28M22 20L27 28M3 18L9 27" stroke="#f0bb45" fill="none"/></svg></div>
<div class="th" style="top:309px;background:#178c4e"></div>
<div class="th" style="top:348px;background:#fff"></div>

<span class="ln" style="top:165px">Layer 2</span><span class="ln" style="top:204px">Layer 5</span>
<span class="ln" style="top:243px;left:1184px;color:#fff;font-weight:bold;font-size:11px">Layer 3</span>
<span class="ln" style="top:282px">Layer 1</span><span class="ln" style="top:321px">Layer 4</span>
<span class="ln" style="top:360px;font-style:italic;font-size:10.7px">Background</span>
<svg style="left:1288px;top:358px" width="11" height="12"><rect x="1" y="5" width="9" height="6.5" fill="#ddd" stroke="#222"/><path d="M3 5V3C3 .8 8 .8 8 3V5" fill="none" stroke="#222"/></svg>

<!-- layers scrollbar -->
<div style="left:1314px;top:150px;width:14px;height:255px;background:repeating-conic-gradient(#cfcfcf 0 25%,#f4f4f4 0 50%) 0 0/2px 2px"></div>
<div class="dd" style="left:1314px;top:150px;width:14px;height:15px"></div>
<div style="left:1318px;top:155px;border:3px solid transparent;border-bottom:4px solid #888;border-top:0"></div>
<div class="dd" style="left:1314px;top:390px;width:14px;height:15px"></div>
<div style="left:1318px;top:396px;border:3px solid transparent;border-top:4px solid #888;border-bottom:0"></div>
<div class="hr" style="left:1121px;top:405px;width:207px"></div>
<svg style="left:1125px;top:406px" width="205" height="18"><g fill="none" stroke="#333">
<path d="M9 5H5C1 5 1 11 5 11H9M13 5H17C21 5 21 11 17 11H13M6 8H16" stroke="#777" stroke-width="1.3"/>
<rect x="59.5" y="3.5" width="12" height="11" fill="#aaa"/><circle cx="65.5" cy="9" r="3.5" fill="#fff"/>
<circle cx="90" cy="9" r="5.5" fill="#ddd"/><path d="M90 3.5A5.5 5.5 0 0 0 90 14.5Z" fill="#222"/>
<path d="M117 13V5H121L122 6.5H127V13Z" fill="#eee"/>
<path d="M144 4H154V14H144Z" fill="#f4f4f4"/><path d="M148 9H154V14H148Z" fill="#555"/>
<path d="M172 6H180L179 15H173Z" fill="#ccc"/><path d="M170 5H182M174 5V3H178V5M175 7V13M177 7V13"/>
</g><path d="M40 14l2 0l-1 1zM101 15h4l-2 2zM192 15h1v1h-1zM196 15h1v1h-1zM200 15h1v1h-1zM196 11h1v1h-1zM200 11h1v1h-1zM200 7h1v1h-1z" fill="#666"/></svg>
<span class="t" style="left:1158px;top:407px;font-family:'Liberation Serif',serif;font-style:italic;font-weight:bold;font-size:14px">fx</span>
<div style="left:1170px;top:420px;border:2px solid transparent;border-top:2px solid #111;border-bottom:0"></div>

<!-- Character panel -->
<div class="p" style="left:1119px;top:429px;width:212px;height:225px"></div>
<div class="hd" style="left:1119px;top:429px;width:212px;height:26px"></div>
<div class="tab" style="left:1194px;top:438px;width:65px;height:17px;padding-left:6px;letter-spacing:.25px">Paragraph</div>
<div class="tab a" style="left:1124px;top:438px;width:70px;height:18px;padding-left:7px;letter-spacing:.05px">Character</div>
<span class="x" style="left:1181px;top:441px">×</span>
<span class="x" style="left:1305px;top:429px">–</span><span class="x" style="left:1319px;top:429px">×</span>
<svg style="left:1313px;top:447px" width="17" height="9"><path d="M1 2H7L4 6Z" fill="#333"/><path d="M9 1H16M9 4H16M9 7H16" stroke="#444"/></svg>
<div class="in" style="left:1127px;top:462px;width:115px;height:18px;line-height:14px">Curlz MT</div><div class="dd" style="left:1225px;top:464px;width:15px;height:14px"></div>
<div class="in" style="left:1249px;top:462px;width:72px;height:18px;line-height:14px">Regular</div><div class="dd" style="left:1305px;top:464px;width:14px;height:14px;background:#b8b6ae"></div>
<div class="hr" style="left:1121px;top:486px;width:205px"></div>

<span class="t" style="left:1128px;top:491px;font-family:'Liberation Serif',serif;font-weight:bold;font-size:16px;line-height:18px;letter-spacing:-1px;color:#222"><span style="position:static;font-size:10px;color:#777">T</span>T</span>
<div class="in" style="left:1151px;top:491px;width:71px;height:18px;line-height:14px">36 pt</div><div class="dd" style="left:1206px;top:493px;width:14px;height:14px;background:#eee"></div>
<span class="t" style="left:1232px;top:490px;font-size:10px;line-height:10px;color:#222;text-align:center">A<br>A</span>
<div class="in" style="left:1253px;top:491px;width:71px;height:18px;line-height:14px">(Auto)</div><div class="dd" style="left:1308px;top:493px;width:14px;height:14px;background:#eee"></div>
<span class="t" style="left:1128px;top:514px;font-size:10px;line-height:14px;color:#333">A<span style="position:static;margin-left:-1px">V</span></span>
<svg style="left:1127px;top:512px" width="18" height="20"><path d="M9 1V19M2 17H16" stroke="#333" fill="none"/></svg>
<div class="in" style="left:1151px;top:514px;width:71px;height:18px;line-height:14px;background:#ececec;color:#8a8a96">Metrics</div><div class="dd" style="left:1206px;top:516px;width:14px;height:14px;background:#eee"></div>
<span class="t" style="left:1229px;top:516px;font-size:10.5px;font-weight:bold;line-height:11px;background:#b5b5b5;padding:0 1px;color:#222">A V</span>
<svg style="left:1230px;top:527px" width="17" height="6"><path d="M1 3H16M3 1L1 3L3 5M14 1L16 3L14 5" stroke="#222" fill="none"/></svg>
<div class="in" style="left:1253px;top:514px;width:71px;height:18px;line-height:14px">0</div><div class="dd" style="left:1308px;top:516px;width:14px;height:14px;background:#eee"></div>
<div class="hr" style="left:1121px;top:537px;width:205px"></div>
<span class="t" style="left:1130px;top:541px;font-family:'Liberation Serif',serif;font-weight:bold;font-size:17px;line-height:18px;color:#222">T</span>
<svg style="left:1127px;top:542px" width="5" height="16"><path d="M2.5 0V16M.5 2L2.5 0L4.5 2M.5 14L2.5 16L4.5 14" stroke="#222" fill="none"/></svg>
<div class="in" style="left:1151px;top:542px;width:54px;height:17px;line-height:14px">100%</div>
<span class="t" style="left:1231px;top:540px;font-family:'Liberation Serif',serif;font-weight:bold;font-size:19px;line-height:18px;color:#111">T</span>
<svg style="left:1230px;top:556px" width="16" height="5"><path d="M0 2.5H16M2 .5L0 2.5L2 4.5M14 .5L16 2.5L14 4.5" stroke="#222" fill="none"/></svg>
<div class="in" style="left:1253px;top:542px;width:54px;height:17px;line-height:14px">100%</div>
<span class="t" style="left:1129px;top:564px;font-size:9px;line-height:10px;color:#222;text-decoration:underline">Aª</span>
<svg style="left:1135px;top:573px" width="6" height="7"><path d="M3 0V7M1 2L3 0L5 2" stroke="#222" fill="none"/></svg>
<div class="in" style="left:1151px;top:563px;width:54px;height:17px;line-height:14px">0 pt</div>
<span class="t" style="left:1222px;top:565px;color:#333;font-size:10.5px">Color:</span>
<div style="left:1253px;top:563px;width:54px;height:16px;background:#ecc9a9;border:1px solid #a39a8f"></div>
<div class="hr" style="left:1121px;top:583px;width:205px"></div>
<span class="t" style="left:1136px;top:592px;font-family:'Liberation Serif',serif;font-weight:bold;font-size:13px">T</span>
<div class="hr" style="left:1121px;top:613px;width:205px"></div>
<div class="in" style="left:1125px;top:618px;width:60px;height:21px;line-height:18px;font-size:11px">English</div>
<div class="hr" style="left:1121px;top:649px;width:205px"></div>

<!-- Tool Presets -->
<div class="p" style="left:1160px;top:585px;width:210px;height:126px;border:1px solid #b5b5b5;border-radius:2px;box-shadow:1px 2px 3px rgba(0,0,0,.45)"></div>
<div class="hd" style="left:1161px;top:586px;width:208px;height:25px"></div>
<div class="tab a" style="left:1165px;top:594px;width:83px;height:18px;padding-left:6px;letter-spacing:.2px">Tool Presets</div>
<span class="x" style="left:1235px;top:597px">×</span>
<span class="x" style="left:1344px;top:585px">–</span><span class="x" style="left:1358px;top:585px">×</span>
<svg style="left:1352px;top:603px" width="17" height="9"><path d="M1 2H7L4 6Z" fill="#333"/><path d="M9 1H16M9 4H16M9 7H16" stroke="#444"/></svg>
<div style="left:1161px;top:612px;width:192px;height:82px;background:#ececec;border-top:1px solid #777"></div>
<span class="t" style="left:1163px;top:614px;font-style:italic;font-size:10.2px;color:#111">No Tool Presets Defined for Current Tool.</span>
<div style="left:1353px;top:614px;width:14px;height:80px;background:repeating-conic-gradient(#cfcfcf 0 25%,#f4f4f4 0 50%) 0 0/2px 2px"></div>
<div class="dd" style="left:1353px;top:614px;width:14px;height:15px"></div><div style="left:1357px;top:619px;border:3px solid transparent;border-bottom:4px solid #000;border-top:0"></div>
<div class="dd" style="left:1353px;top:630px;width:14px;height:32px"></div>
<div class="dd" style="left:1353px;top:678px;width:14px;height:16px"></div><div style="left:1357px;top:684px;border:3px solid transparent;border-top:4px solid #000;border-bottom:0"></div>
<div class="hr" style="left:1161px;top:694px;width:207px"></div>
<div style="left:1163px;top:697px;width:9px;height:9px;background:#fff;border:1px solid #222"></div>
<svg style="left:1164px;top:698px" width="8" height="8"><path d="M1 4L3 6L7 1" stroke="#000" stroke-width="1.4" fill="none"/></svg>
<span class="t" style="left:1176px;top:696px;font-size:10.7px;color:#222">Current Tool Only</span>
<svg style="left:1305px;top:696px" width="45" height="13"><path d="M1.5 2.5H10.5V11.5H1.5Z" fill="#f4f4f4" stroke="#333"/><path d="M5 6.5H10.5V11.5H5Z" fill="#555"/><path d="M31 3H39L38 12H32Z" fill="#ccc" stroke="#777"/><path d="M29 3H41M33 3V1H37V3" stroke="#777" fill="none"/></svg>
<svg style="left:1356px;top:698px" width="12" height="12"><path d="M9 1h1v1H9zM5 5h1v1H5zM9 5h1v1H9zM1 9h1v1H1zM5 9h1v1H5zM9 9h1v1H9z" fill="#777"/></svg>

<!-- right rail -->
<div class="p" style="left:1334px;top:73px;width:102px;height:65px"></div>
<div class="hd" style="left:1334px;top:73px;width:102px;height:8px"></div>
<div class="p" style="left:1334px;top:143px;width:102px;height:94px"></div>
<div class="hd" style="left:1334px;top:143px;width:102px;height:8px"></div>
<div class="rb" style="top:87px"></div>
<svg style="left:1338px;top:90px" width="18" height="15"><rect x=".5" y=".5" width="17" height="14" fill="#eee" stroke="#333"/><path d="M1 14L4 9L6 7L8 9L10 4L12 8L14 6L17 14Z" fill="#333"/></svg>
<span class="rt" style="top:93px">Histogram</span>
<div class="rb" style="top:114px;border-radius:4px"></div>
<svg style="left:1338px;top:116px" width="18" height="17"><circle cx="9" cy="8.5" r="8" fill="#555"/><circle cx="9" cy="8.5" r="8" fill="none" stroke="#222"/><rect x="7.5" y="7" width="3" height="7" fill="#fff"/><circle cx="9" cy="4.5" r="1.6" fill="#fff"/></svg>
<span class="rt" style="top:120px;left:1362px">Info</span>
<div class="rb" style="top:157px"></div>
<svg style="left:1337px;top:160px" width="20" height="16"><path d="M1 10C1 4 9 0 15 1C20 3 19 6 15 6C12 7 14 11 11 13C7 16 1 15 1 10Z" fill="#444" stroke="#222"/><circle cx="6" cy="7" r="1.5" fill="#ddd"/><circle cx="10" cy="4" r="1.5" fill="#bbb"/><circle cx="5" cy="11" r="1.5" fill="#999"/></svg>
<span class="rt" style="top:163px">Color</span>
<div class="rb" style="top:184px"></div>
<svg style="left:1338px;top:187px" width="17" height="15"><rect x=".5" y=".5" width="16" height="14" fill="#333" stroke="#111"/><path d="M4.5 1V14M8.5 1V14M12.5 1V14M1 5H16M1 9.5H16" stroke="#ccc"/></svg>
<span class="rt" style="top:190px">Swatches</span>
<div class="rb" style="top:211px"></div>
<div style="left:1340px;top:214px;width:14px;height:14px;background:#f4f4f4;border:1px solid #444"></div>
<span class="t" style="left:1337px;top:219px;font-family:'Liberation Serif',serif;font-style:italic;font-weight:bold;font-size:12px;line-height:12px">fx</span>
<span class="rt" style="top:217px">Styles</span>
</body></html>
